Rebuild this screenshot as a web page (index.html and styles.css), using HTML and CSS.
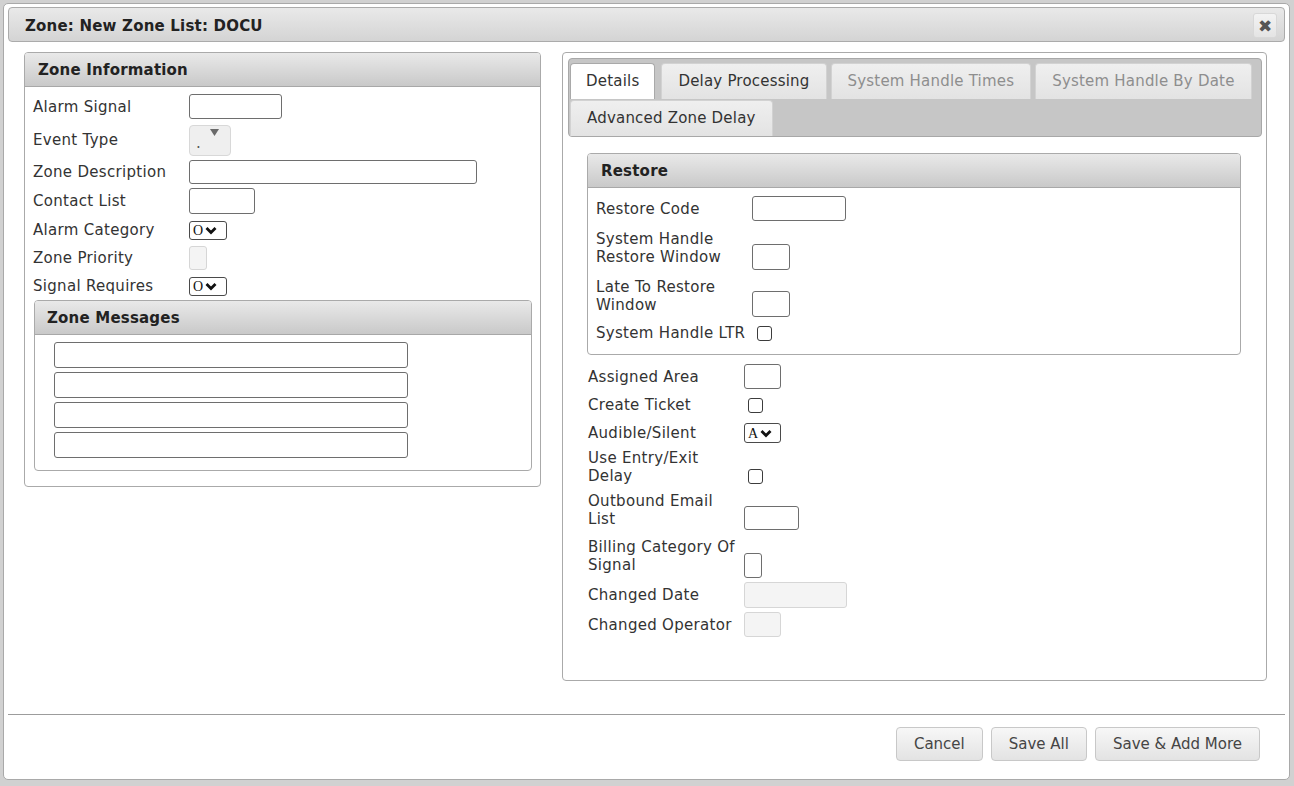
FILE: index.html
```html
<!DOCTYPE html>
<html>
<head>
<meta charset="utf-8">
<title>Zone: New Zone List: DOCU</title>
<link rel="stylesheet" href="styles.css">
</head>
<body>
<div class="dialog">
  <div class="titlebar">
    <span class="title">Zone: New Zone List: DOCU</span>
    <span class="close">&#x2716;</span>
  </div>
  <div class="content">
    <section class="panel panel-left">
      <div class="panel-head">Zone Information</div>
      <div class="form form-left">
        <div class="lbl">Alarm Signal</div>
        <div class="ctl"><input type="text" class="txt w-alarm"></div>
        <div class="lbl">Event Type</div>
        <div class="ctl"><span class="evt"><span class="evt-dot">.</span><svg class="evt-arrow" width="9" height="7" viewBox="0 0 9 7"><path d="M0 0 L9 0 L4.5 7 Z" fill="#6a6a6a"/></svg></span></div>
        <div class="lbl">Zone Description</div>
        <div class="ctl"><input type="text" class="txt w-desc"></div>
        <div class="lbl">Contact List</div>
        <div class="ctl"><input type="text" class="txt w-contact"></div>
        <div class="lbl">Alarm Category</div>
        <div class="ctl"><span class="sel"><span class="sel-val">O</span><svg width="12" height="9" viewBox="0 0 12 9"><path d="M1.5 2 L6 6.5 L10.5 2" fill="none" stroke="#111" stroke-width="2.8"/></svg></span></div>
        <div class="lbl">Zone Priority</div>
        <div class="ctl"><input type="text" class="txt dis w-prio" disabled></div>
        <div class="lbl">Signal Requires</div>
        <div class="ctl"><span class="sel"><span class="sel-val">O</span><svg width="12" height="9" viewBox="0 0 12 9"><path d="M1.5 2 L6 6.5 L10.5 2" fill="none" stroke="#111" stroke-width="2.8"/></svg></span></div>
      </div>
      <section class="panel msgs">
        <div class="panel-head sub-head">Zone Messages</div>
        <div class="msg-list">
          <input type="text" class="txt w-msg">
          <input type="text" class="txt w-msg">
          <input type="text" class="txt w-msg">
          <input type="text" class="txt w-msg">
        </div>
      </section>
    </section>

    <section class="panel panel-right">
      <div class="tabs">
        <div class="tab active">Details</div>
        <div class="tab">Delay Processing</div>
        <div class="tab disabled">System Handle Times</div>
        <div class="tab disabled">System Handle By Date</div>
        <div class="tab">Advanced Zone Delay</div>
      </div>

      <section class="panel restore">
        <div class="panel-head">Restore</div>
        <div class="form form-restore">
          <div class="lbl">Restore Code</div>
          <div class="ctl"><input type="text" class="txt w-restore"></div>
          <div class="lbl">System Handle Restore Window</div>
          <div class="ctl drop"><input type="text" class="txt w-small"></div>
          <div class="lbl">Late To Restore Window</div>
          <div class="ctl drop-sm"><input type="text" class="txt w-small"></div>
          <div class="lbl">System Handle LTR</div>
          <div class="ctl"><input type="checkbox" class="chk chk-ltr"></div>
        </div>
      </section>

      <div class="form form-lower">
        <div class="lbl">Assigned Area</div>
        <div class="ctl"><input type="text" class="txt w-area"></div>
        <div class="lbl">Create Ticket</div>
        <div class="ctl"><input type="checkbox" class="chk"></div>
        <div class="lbl">Audible/Silent</div>
        <div class="ctl"><span class="sel sel-a"><span class="sel-val">A</span><svg width="12" height="9" viewBox="0 0 12 9"><path d="M1.5 2 L6 6.5 L10.5 2" fill="none" stroke="#111" stroke-width="2.8"/></svg></span></div>
        <div class="lbl">Use Entry/Exit Delay</div>
        <div class="ctl drop"><input type="checkbox" class="chk"></div>
        <div class="lbl">Outbound Email List</div>
        <div class="ctl drop-sm"><input type="text" class="txt w-email"></div>
        <div class="lbl">Billing Category Of Signal</div>
        <div class="ctl drop"><input type="text" class="txt w-bill"></div>
        <div class="lbl">Changed Date</div>
        <div class="ctl"><input type="text" class="txt dis w-date" disabled></div>
        <div class="lbl">Changed Operator</div>
        <div class="ctl"><input type="text" class="txt dis w-op" disabled></div>
      </div>
    </section>
  </div>
  <div class="footer">
    <button class="btn">Cancel</button>
    <button class="btn">Save All</button>
    <button class="btn">Save &amp; Add More</button>
  </div>
</div>
</body>
</html>
```

FILE: styles.css
```css
html, body {
  margin: 0;
  padding: 0;
}
body {
  background: #d1d1d1;
  font-family: "DejaVu Sans", Verdana, sans-serif;
  font-size: 15px;
  letter-spacing: 0.3px;
  color: #333;
}

.dialog {
  box-sizing: border-box;
  width: 1287px;
  height: 777px;
  margin: 3px 0 0 3px;
  background: #fff;
  border: 1px solid #a9a9a9;
  border-radius: 5px;
  padding: 3px 4px 4px 4px;
  display: flex;
  flex-direction: column;
}

.titlebar {
  flex: none;
  box-sizing: border-box;
  height: 35px;
  border: 1px solid #ababab;
  border-radius: 4px;
  background: linear-gradient(#e9e9e9, #d4d4d4);
  display: flex;
  align-items: center;
  justify-content: space-between;
  padding: 0 7px 0 16px;
}
.title {
  font-weight: bold;
  color: #222;
  letter-spacing: 0.2px;
  padding-top: 3px;
}
.close {
  box-sizing: border-box;
  width: 24px;
  height: 25px;
  margin-top: 2px;
  border: 1px solid #d8d8d8;
  border-radius: 3px;
  background: linear-gradient(#f3f3f3, #e4e4e4);
  color: #555;
  font-size: 17px;
  letter-spacing: 0;
  display: flex;
  align-items: center;
  justify-content: center;
}

.content {
  flex: 1;
  display: flex;
  align-items: flex-start;
  gap: 21px;
  padding: 10px 0 0 16px;
}

.panel {
  box-sizing: border-box;
  border: 1px solid #aaaaaa;
  border-radius: 4px;
  background: #fff;
}
.panel-head {
  box-sizing: border-box;
  height: 34px;
  line-height: 33px;
  padding: 1px 0 0 13px;
  font-weight: bold;
  letter-spacing: 0.2px;
  color: #222;
  background: linear-gradient(#e9e9e9, #c9c9c9);
  border-bottom: 1px solid #a8a8a8;
  border-radius: 3px 3px 0 0;
}
.sub-head {
  padding-left: 12px;
}

.panel-left {
  width: 517px;
}
.panel-right {
  width: 705px;
  height: 629px;
}

.form {
  display: grid;
  grid-auto-rows: minmax(28px, auto);
  align-items: center;
}
.form-left {
  grid-template-columns: 156px 1fr;
  padding: 5px 8px 0 8px;
}
.form-restore {
  grid-template-columns: 156px 1fr;
  padding: 6px 8px 7px 8px;
}
.form-lower {
  grid-template-columns: 156px 1fr;
  padding: 7px 0 0 25px;
}

.lbl {
  padding: 2px 3px 2px 0;
  line-height: 18px;
  color: #333;
}
.ctl {
  padding: 2px 0;
  display: flex;
  align-items: center;
}
.ctl.drop {
  padding-top: 21px;
}
.ctl.drop-sm {
  padding-top: 19px;
}

.txt {
  box-sizing: border-box;
  display: block;
  margin: 0;
  padding: 0 4px;
  height: 25px;
  border: 1px solid #6e6e6e;
  border-radius: 3px;
  background: #fff;
  font: inherit;
}
.txt.dis {
  background: #f4f4f4;
  border-color: #d6d6d6;
}
.w-alarm { width: 93px; }
.w-desc { width: 288px; height: 24px; }
.w-contact { width: 66px; height: 26px; }
.w-prio { width: 18px; height: 24px; }
.w-msg { width: 354px; height: 26px; }
.w-restore { width: 94px; }
.w-small { width: 38px; height: 26px; }
.w-area { width: 37px; }
.w-email { width: 55px; height: 24px; }
.w-bill { width: 18px; }
.w-date { width: 103px; height: 26px; }
.w-op { width: 37px; }

.evt {
  box-sizing: border-box;
  width: 42px;
  height: 31px;
  margin-top: 2px;
  border: 1px solid #d8d8d8;
  border-radius: 4px;
  background: #efefef;
  display: flex;
  align-items: flex-start;
  padding: 1px 0 0 6px;
  color: #555;
}
.evt-dot {
  line-height: 18px;
  margin-top: 7px;
}
.evt-arrow {
  margin: 2px 0 0 9px;
}

.sel {
  box-sizing: border-box;
  width: 38px;
  height: 19px;
  border: 1px solid #4a4a4a;
  border-radius: 3px;
  background: #fff;
  display: flex;
  align-items: center;
  gap: 2px;
  padding: 0 0 0 3px;
  font-family: "Liberation Serif", serif;
  font-size: 14px;
  letter-spacing: 0;
  color: #111;
}
.sel-val {
  line-height: 17px;
}
.sel-a {
  width: 37px;
  height: 20px;
}

.chk {
  -webkit-appearance: none;
  appearance: none;
  box-sizing: border-box;
  width: 15px;
  height: 15px;
  margin: 0 0 0 4px;
  border: 1px solid #3c3c3c;
  border-radius: 3px;
  background: #fff;
}
.chk-ltr {
  margin-left: 5px;
}

.msgs {
  margin: 0 8px 15px 9px;
}
.msg-list {
  display: flex;
  flex-direction: column;
  gap: 4px;
  padding: 7px 0 12px 19px;
}

.tabs {
  margin: 5px 4px 0 5px;
  border: 1px solid #a8a8a8;
  border-radius: 4px;
  background: #c6c6c6;
  padding: 4px 0 0 1px;
  display: flex;
  flex-wrap: wrap;
  row-gap: 1px;
}
.tab {
  box-sizing: border-box;
  height: 36px;
  line-height: 35px;
  padding: 0 16px;
  margin-right: 4px;
  border: 1px solid #d2d2d2;
  border-bottom: none;
  border-radius: 4px 4px 0 0;
  background: linear-gradient(#efefef, #e3e3e3);
  color: #333;
  letter-spacing: 0.2px;
  white-space: nowrap;
}
.tab.active {
  background: #fff;
  border-color: #a9a9a9;
  padding: 0 15px;
  margin-right: 6px;
}
.tab.disabled {
  color: #8e8e8e;
}

.restore {
  margin: 16px 25px 0 24px;
}

.footer {
  flex: none;
  box-sizing: border-box;
  height: 61px;
  border-top: 1px solid #9c9c9c;
  display: flex;
  justify-content: flex-end;
  align-items: flex-start;
  gap: 8px;
  padding: 12px 25px 0 0;
}
.btn {
  box-sizing: border-box;
  height: 34px;
  padding: 0 17px;
  border: 1px solid #c8c8c8;
  border-radius: 4px;
  background: linear-gradient(#f7f7f7, #e3e3e3);
  font: inherit;
  color: #454545;
}
```
